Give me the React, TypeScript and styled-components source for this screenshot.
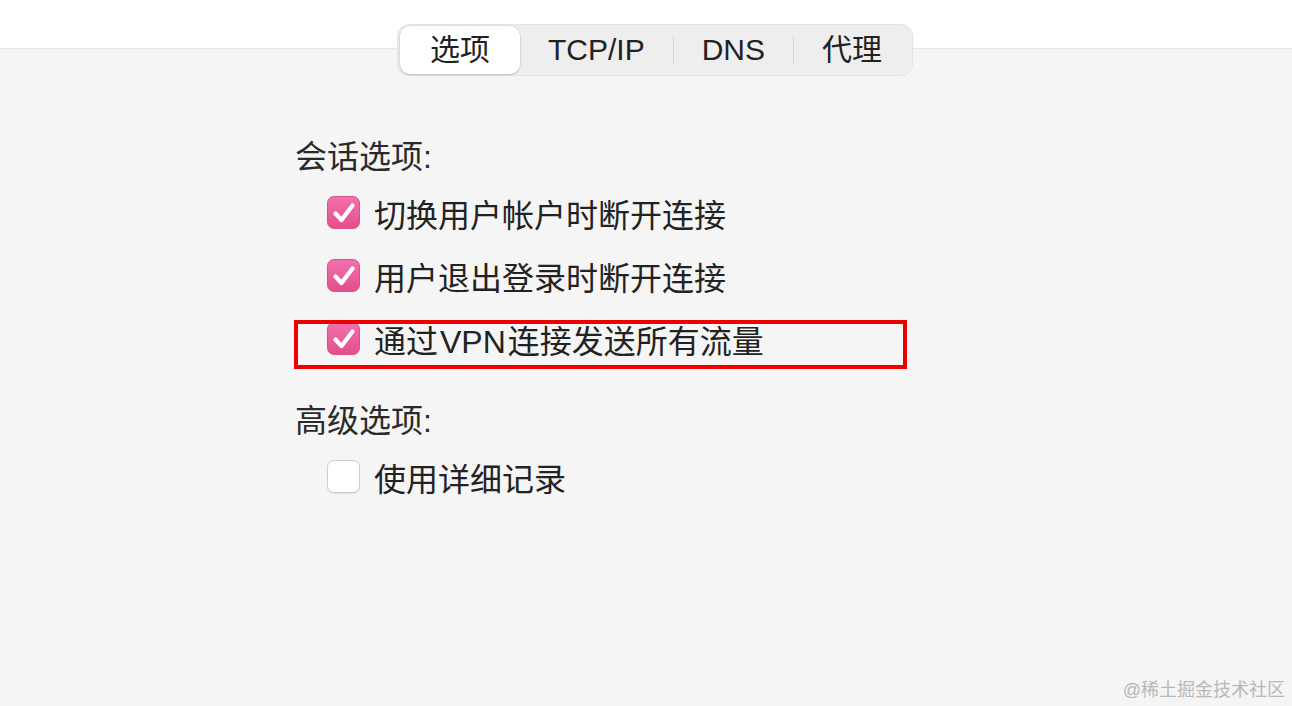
import React from 'react';
import styled, { createGlobalStyle } from 'styled-components';

const GlobalStyle = createGlobalStyle`
  html, body {
    margin: 0;
    padding: 0;
    background: #f5f5f5;
  }
  * {
    box-sizing: border-box;
  }
`;

const FONT = `"Liberation Sans", "Noto Sans CJK SC", sans-serif`;

const Page = styled.div`
  position: relative;
  width: 1292px;
  height: 706px;
  overflow: hidden;
  font-family: ${FONT};
  color: #262626;
  background: linear-gradient(#ffffff 0 48px, #e6e6e6 48px 49px, #f5f5f5 49px);
`;

const TabRow = styled.div`
  display: flex;
  justify-content: center;
  padding: 24px 0 0 18px;
`;

const TabBar = styled.div`
  display: flex;
  align-items: center;
  height: 52px;
  padding: 2px;
  border-radius: 12px;
  background: #eeeeee;
  border: 1px solid #e4e4e4;
`;

const Tab = styled.div<{ $active?: boolean }>`
  height: 48px;
  display: flex;
  align-items: center;
  padding: 0 ${(p) => (p.$active ? 30 : 28)}px;
  font-size: 30px;
  line-height: 1;
  color: #222;
  border-radius: 10px;
  background: ${(p) => (p.$active ? '#ffffff' : 'transparent')};
  box-shadow: ${(p) => (p.$active ? '0 1px 2px rgba(0,0,0,0.18), 0 0 0 0.5px rgba(0,0,0,0.08)' : 'none')};
`;

const Divider = styled.div`
  width: 1px;
  height: 28px;
  background: #d6d6d6;
`;

const Content = styled.div`
  padding: 61px 0 0 295px;
`;

const Section = styled.div`
  & + & {
    margin-top: 31px;
  }
`;

const SectionLabel = styled.div`
  font-size: 32px;
  line-height: 40px;
  height: 40px;
  margin-bottom: 4px;
  color: #2a2a2a;
`;

const Row = styled.div`
  position: relative;
  display: flex;
  align-items: center;
  height: 63px;
  padding-left: 32px;
  gap: 14px;
  font-size: 32px;
  color: #222;
`;

const Box = styled.span<{ $checked?: boolean }>`
  flex: none;
  width: 33px;
  height: 33px;
  border-radius: 7px;
  display: flex;
  align-items: center;
  justify-content: center;
  background: ${(p) => (p.$checked ? 'linear-gradient(#f271ad, #e44e8d)' : '#ffffff')};
  border: 1px solid ${(p) => (p.$checked ? '#dd4f8a' : '#cfcfcf')};
  box-shadow: ${(p) => (p.$checked ? 'none' : '0 0.5px 1px rgba(0,0,0,0.08)')};
`;

const Vpn = styled.span`
  margin: 0 2px;
`;

const Highlight = styled.div`
  position: absolute;
  left: -1px;
  top: 13px;
  width: 613px;
  height: 49px;
  border: 4px solid #ee0000;
  pointer-events: none;
`;

const Watermark = styled.div`
  position: absolute;
  right: 7px;
  bottom: 5px;
  font-size: 18px;
  color: #b8b8b8;
  font-family: ${FONT};
`;

const Check = () => (
  <svg width="26" height="24" viewBox="0 0 26 24">
    <path
      d="M4.5 12.5 L10.5 19 L21.5 4.5"
      fill="none"
      stroke="#ffffff"
      strokeWidth="4.2"
      strokeLinecap="round"
      strokeLinejoin="round"
    />
  </svg>
);

const Option: React.FC<{ checked?: boolean; marked?: boolean; children: React.ReactNode }> = ({
  checked,
  marked,
  children,
}) => (
  <Row>
    <Box $checked={checked}>{checked && <Check />}</Box>
    <span>{children}</span>
    {marked && <Highlight />}
  </Row>
);

const tabs = ['选项', 'TCP/IP', 'DNS', '代理'];

export default function App() {
  return (
    <Page>
      <GlobalStyle />
      <TabRow>
        <TabBar>
          {tabs.map((t, i) => (
            <React.Fragment key={t}>
              {i > 1 && <Divider />}
              <Tab $active={i === 0}>{t}</Tab>
            </React.Fragment>
          ))}
        </TabBar>
      </TabRow>
      <Content>
        <Section>
          <SectionLabel>会话选项:</SectionLabel>
          <Option checked>切换用户帐户时断开连接</Option>
          <Option checked>用户退出登录时断开连接</Option>
          <Option checked marked>
            通过<Vpn>VPN</Vpn>连接发送所有流量
          </Option>
        </Section>
        <Section>
          <SectionLabel>高级选项:</SectionLabel>
          <Option>使用详细记录</Option>
        </Section>
      </Content>
      <Watermark>@稀土掘金技术社区</Watermark>
    </Page>
  );
}
